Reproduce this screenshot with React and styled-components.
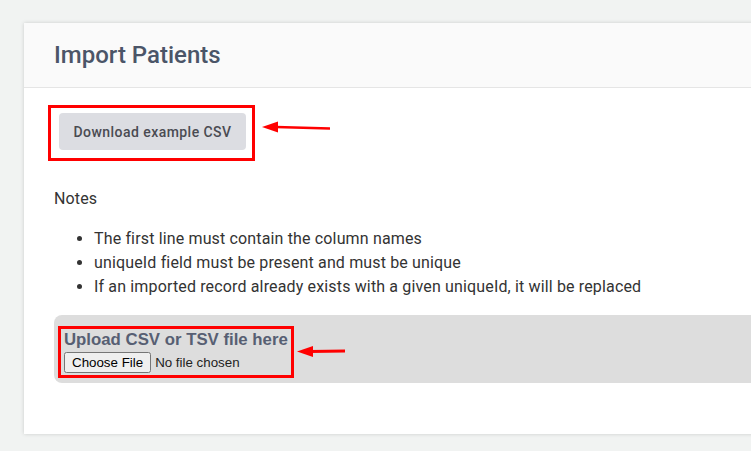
import React from 'react';
import styled, { createGlobalStyle } from 'styled-components';

const Global = createGlobalStyle`
  html, body { margin: 0; padding: 0; background: #f1f3f2; overflow: hidden; }
  body { font-family: Roboto, "Noto Sans", sans-serif; }
`;

const Page = styled.div`
  padding: 23px 0 0 24px;
  height: 451px;
  box-sizing: border-box;
`;

const Card = styled.div`
  position: relative;
  width: 790px;
  height: 411px;
  background: #ffffff;
  box-shadow: 0 0 4px rgba(0, 0, 0, 0.16);
`;

const Header = styled.div`
  height: 64px;
  background: #fafafa;
  border-bottom: 1px solid #e5e5e5;
  display: flex;
  align-items: center;
  padding-left: 30px;
`;

const Title = styled.h1`
  margin: 0;
  font-size: 24px;
  font-weight: 500;
  color: #4b5568;
`;

const Body = styled.div`
  padding: 17px 0 0 30px;
`;

const Highlight = styled.div`
  display: inline-flex;
  flex-direction: column;
  align-items: flex-start;
  border: 3px solid #ff0000;
  padding: ${p => p.$pad};
  margin-left: ${p => p.$ml};
`;

const GrayButton = styled.button`
  border: none;
  background: #dcdde2;
  border-radius: 4px;
  width: 187px;
  height: 37px;
  font-family: Roboto, sans-serif;
  font-size: 14px;
  font-weight: 500;
  color: #4a4b52;
  letter-spacing: 0.45px;
  cursor: pointer;
`;

const Notes = styled.p`
  margin: 26px 0 16px;
  font-size: 16px;
  line-height: 24px;
  letter-spacing: 0.15px;
  color: #333;
`;

const List = styled.ul`
  margin: 0;
  padding-left: 40px;
  font-size: 16px;
  line-height: 24px;
  letter-spacing: 0.15px;
  color: #333;
`;

const Dropzone = styled.div`
  margin-top: 16px;
  height: 68px;
  background: #dddddd;
  border-radius: 8px 0 0 8px;
  padding: 11px 0 0 4px;
  box-sizing: border-box;
`;

const UploadTitle = styled.h3`
  margin: 0;
  font-family: "Liberation Sans", Arial, sans-serif;
  font-size: 16.8px;
  font-weight: 700;
  line-height: 21px;
  color: #575f73;
`;

const FileInput = styled.input`
  margin: 2px 0 0;
  width: 200px;
  font-family: "Liberation Sans", Arial, sans-serif;
  font-size: 13.33px;
  color: #222;
`;

const Overlay = styled.svg`
  position: absolute;
  left: 0;
  top: 0;
  pointer-events: none;
`;

export default function App() {
  return (
    <>
      <Global />
      <Page>
        <Card>
          <Header>
            <Title>Import Patients</Title>
          </Header>
          <Body>
            <Highlight $pad="5px 6px 8px 8px" $ml="-6px">
              <GrayButton>Download example CSV</GrayButton>
            </Highlight>
            <Notes>Notes</Notes>
            <List>
              <li>The first line must contain the column names</li>
              <li>uniqueId field must be present and must be unique</li>
              <li>If an imported record already exists with a given uniqueId, it will be replaced</li>
            </List>
            <Dropzone>
              <Highlight $pad="0 3px 2px 3px" $ml="0">
                <UploadTitle>Upload CSV or TSV file here</UploadTitle>
                <FileInput type="file" />
              </Highlight>
            </Dropzone>
          </Body>
          <Overlay width="400" height="411" viewBox="0 0 400 411">
            <line x1="252" y1="104" x2="306" y2="105.5" stroke="#ff0000" strokeWidth="2.5" />
            <polygon points="238,104 254,98.5 254,109.5" fill="#ff0000" />
            <line x1="286" y1="328.5" x2="321" y2="328" stroke="#ff0000" strokeWidth="3" />
            <polygon points="273,328.5 289,323 289,334" fill="#ff0000" />
          </Overlay>
        </Card>
      </Page>
    </>
  );
}
